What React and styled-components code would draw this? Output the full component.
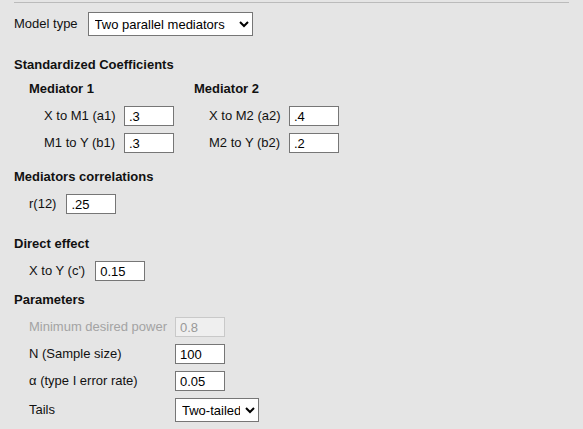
import React from 'react'
import styled, { createGlobalStyle } from 'styled-components'

const Global = createGlobalStyle`
  html, body {
    margin: 0;
    background: #e5e5e5;
  }
  body {
    font-family: "Liberation Sans", Arial, sans-serif;
    font-size: 13px;
    color: #111;
  }
`

const Page = styled.div`
  padding: 2px 14px 0 14px;
  width: 555px;
`

const Rule = styled.div`
  height: 1px;
  background: #bbb;
`

const Row = styled.div`
  display: flex;
  align-items: center;
  gap: ${p => p.$gap || 10}px;
  margin-top: ${p => p.$top || 0}px;
  padding-left: ${p => p.$indent || 0}px;
  height: ${p => p.$h || 20}px;
`

const Label = styled.span`
  line-height: 16px;
  white-space: nowrap;
  color: ${p => (p.$disabled ? '#a3a3a3' : '#111')};
`

const Heading = styled.div`
  font-weight: bold;
  line-height: 18px;
  margin-top: ${p => p.$top || 0}px;
  padding-left: ${p => p.$indent || 0}px;
`

const Select = styled.select`
  font-family: "Liberation Sans", Arial, sans-serif;
  font-size: 13px;
  height: ${p => p.$h || 24}px;
  width: ${p => p.$w}px;
  box-sizing: border-box;
  border: 1px solid #767676;
  border-radius: 0;
  background: #fff;
  color: #000;
  padding: 0 2px;
`

const Input = styled.input`
  font-family: "Liberation Sans", Arial, sans-serif;
  font-size: 13px;
  width: 50px;
  height: 20px;
  box-sizing: border-box;
  padding: 0 4px;
  margin: 0;
  border: 1px solid ${p => (p.disabled ? '#c9c9c9' : '#767676')};
  background: ${p => (p.disabled ? '#efefef' : '#fff')};
  color: ${p => (p.disabled ? '#999' : '#000')};
  border-radius: 0;
  outline: none;
`

const Columns = styled.div`
  display: grid;
  grid-template-columns: 165px 165px;
  padding-left: 15px;
  margin-top: 6px;
`

const CoefGrid = styled.div`
  display: grid;
  grid-template-columns: 80px 50px;
  grid-auto-rows: 20px;
  row-gap: 7px;
  align-items: center;
  padding-left: 15px;
  margin-top: 8px;
`

const ParamGrid = styled.div`
  display: grid;
  grid-template-columns: 146px auto;
  grid-template-rows: 20px 20px 20px 24px;
  row-gap: 7px;
  align-items: center;
  justify-items: start;
  padding-left: 15px;
  margin-top: 8px;
`

const mediators = [
  { name: 'Mediator 1', rows: [['X to M1 (a1)', '.3'], ['M1 to Y (b1)', '.3']] },
  { name: 'Mediator 2', rows: [['X to M2 (a2)', '.4'], ['M2 to Y (b2)', '.2']] },
]

export default function App() {
  return (
    <Page>
      <Global />
      <Rule />
      <Row $top={9} $h={24}>
        <Label>Model type</Label>
        <Select $w={165} defaultValue="two">
          <option value="two">Two parallel mediators</option>
        </Select>
      </Row>

      <Heading $top={20}>Standardized Coefficients</Heading>
      <Columns>
        {mediators.map(m => (
          <div key={m.name}>
            <Heading>{m.name}</Heading>
            <CoefGrid>
              {m.rows.map(([l, v]) => (
                <React.Fragment key={l}>
                  <Label>{l}</Label>
                  <Input defaultValue={v} />
                </React.Fragment>
              ))}
            </CoefGrid>
          </div>
        ))}
      </Columns>

      <Heading $top={15}>Mediators correlations</Heading>
      <Row $top={8} $indent={15}>
        <Label>r(12)</Label>
        <Input defaultValue=".25" />
      </Row>

      <Heading $top={21}>Direct effect</Heading>
      <Row $top={8} $indent={15}>
        <Label>X to Y (c')</Label>
        <Input defaultValue="0.15" />
      </Row>

      <Heading $top={10}>Parameters</Heading>
      <ParamGrid>
        <Label $disabled>Minimum desired power</Label>
        <Input disabled defaultValue="0.8" />
        <Label>N (Sample size)</Label>
        <Input defaultValue="100" />
        <Label>α (type I error rate)</Label>
        <Input defaultValue="0.05" />
        <Label>Tails</Label>
        <Select $w={84} defaultValue="two">
          <option value="two">Two-tailed</option>
          <option value="one">One-tailed</option>
        </Select>
      </ParamGrid>
    </Page>
  )
}
